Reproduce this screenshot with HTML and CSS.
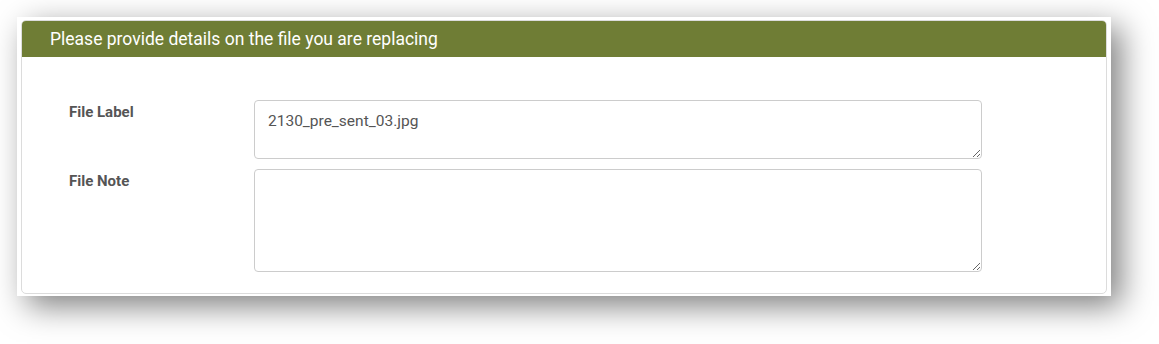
FILE: index.html
```html
<!DOCTYPE html>
<html lang="en">
<head>
    <meta charset="UTF-8">
    <title>Replace File</title>
    <link rel="stylesheet" href="styles.css">
</head>
<body>
    <div class="shot">
        <div class="panel">
            <div class="panel-heading">Please provide details on the file you are replacing</div>
            <div class="panel-body">
                <div class="form-row">
                    <label for="file-label">File Label</label>
                    <textarea id="file-label" class="short">2130_pre_sent_03.jpg</textarea>
                </div>
                <div class="form-row">
                    <label for="file-note">File Note</label>
                    <textarea id="file-note" class="tall"></textarea>
                </div>
            </div>
        </div>
    </div>
</body>
</html>
```

FILE: styles.css
```css
html {
    height: 100%;
}

body {
    margin: 0;
    height: 100%;
    box-sizing: border-box;
    padding: 17px 0 0 17px;
    background-color: #fff;
    font-family: Roboto, "Liberation Sans", Arial, sans-serif;
}

.shot {
    width: 1086px;
    padding: 3px 4px 2px 4px;
    background-color: #fff;
    box-shadow: 10px 10px 30px rgba(0,0,0,0.5);
}

.panel {
    border: 1px solid #dcdcdc;
    border-radius: 5px;
    overflow: hidden;
}

.panel-heading {
    background-color: #6f7d35;
    color: #fff;
    font-size: 17.5px;
    height: 36px;
    line-height: 36px;
    padding-left: 28px;
}

.panel-body {
    padding: 43px 0 21px 47px;
}

.form-row {
    display: flex;
    margin-bottom: 10px;
}

.form-row:last-child {
    margin-bottom: 0;
}

label {
    width: 185px;
    padding-top: 3px;
    font-size: 15px;
    font-weight: bold;
    color: #555;
}

textarea {
    width: 728px;
    box-sizing: border-box;
    margin: 0;
    padding: 9px 13px;
    border: 1px solid #ccc;
    border-radius: 4px;
    font-family: Roboto, "Liberation Sans", Arial, sans-serif;
    font-size: 15.5px;
    color: #555;
    line-height: 22px;
}

textarea.short {
    height: 59px;
}

textarea.tall {
    height: 103px;
}
```
